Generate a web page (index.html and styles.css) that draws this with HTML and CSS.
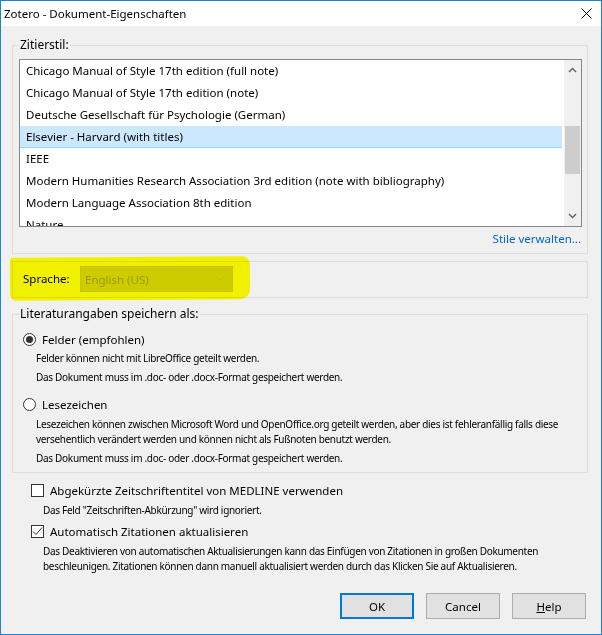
FILE: index.html
```html
<!DOCTYPE html>
<html lang="de">

<head>
    <meta charset="UTF-8">
    <meta name="viewport" content="width=device-width, initial-scale=1.0">
    <title>Zotero - Dokument-Eigenschaften</title>
    <link rel="stylesheet" href="styles.css">
</head>

<body>
    <div class="window">
        <div class="titlebar">
            <span class="title">Zotero - Dokument-Eigenschaften</span>
            <svg class="close" width="11" height="11" viewBox="0 0 11 11">
                <path d="M0.5 0.5L10.5 10.5M10.5 0.5L0.5 10.5" stroke="#000" stroke-width="1" />
            </svg>
        </div>

        <div class="content">
            <fieldset class="group styles">
                <legend>Zitierstil:</legend>
                <div class="listbox">
                    <ul class="items">
                        <li>Chicago Manual of Style 17th edition (full note)</li>
                        <li>Chicago Manual of Style 17th edition (note)</li>
                        <li>Deutsche Gesellschaft für Psychologie (German)</li>
                        <li class="selected">Elsevier - Harvard (with titles)</li>
                        <li>IEEE</li>
                        <li>Modern Humanities Research Association 3rd edition (note with bibliography)</li>
                        <li>Modern Language Association 8th edition</li>
                        <li>Nature</li>
                    </ul>
                    <div class="scrollbar">
                        <svg class="arrow" width="9" height="6" viewBox="0 0 9 6">
                            <path d="M1 5L4.5 1.5L8 5" fill="none" stroke="#606060" stroke-width="1.4" />
                        </svg>
                        <div class="track">
                            <div class="thumb"></div>
                        </div>
                        <svg class="arrow" width="9" height="6" viewBox="0 0 9 6">
                            <path d="M1 1L4.5 4.5L8 1" fill="none" stroke="#606060" stroke-width="1.4" />
                        </svg>
                    </div>
                </div>
                <div class="manage"><a href="#">Stile verwalten...</a></div>
            </fieldset>

            <div class="group language">
                <span class="marker"></span>
                <label class="lang-label">Sprache:</label>
                <div class="combo">
                    <span>English (US)</span>
                    <svg width="9" height="6" viewBox="0 0 9 6">
                        <path d="M1 1L4.5 4.5L8 1" fill="none" stroke="#bcbcbc" stroke-width="1" />
                    </svg>
                </div>
            </div>

            <fieldset class="group storage">
                <legend>Literaturangaben speichern als:</legend>
                <div class="option">
                    <span class="radio checked"></span>
                    <span>Felder (empfohlen)</span>
                </div>
                <p class="note first">Felder können nicht mit LibreOffice geteilt werden.</p>
                <p class="note">Das Dokument muss im .doc- oder .docx-Format gespeichert werden.</p>
                <div class="option second">
                    <span class="radio"></span>
                    <span>Lesezeichen</span>
                </div>
                <p class="note">Lesezeichen können zwischen Microsoft Word und OpenOffice.org geteilt werden, aber dies ist fehleranfällig falls diese versehentlich verändert werden und können nicht als Fußnoten benutzt werden.</p>
                <p class="note">Das Dokument muss im .doc- oder .docx-Format gespeichert werden.</p>
            </fieldset>

            <div class="checks">
                <div class="option">
                    <span class="checkbox"></span>
                    <span>Abgekürzte Zeitschriftentitel von MEDLINE verwenden</span>
                </div>
                <p class="note">Das Feld "Zeitschriften-Abkürzung" wird ignoriert.</p>
                <div class="option">
                    <span class="checkbox">
                        <svg width="11" height="11" viewBox="0 0 11 11">
                            <path d="M1 5.5L4 8.5L10 1.5" fill="none" stroke="#333" stroke-width="1" />
                        </svg>
                    </span>
                    <span>Automatisch Zitationen aktualisieren</span>
                </div>
                <p class="note">Das Deaktivieren von automatischen Aktualisierungen kann das Einfügen von Zitationen in großen Dokumenten beschleunigen. Zitationen können dann manuell aktualisiert werden durch das Klicken Sie auf Aktualisieren.</p>
            </div>

            <div class="buttons">
                <button class="default">OK</button>
                <button>Cancel</button>
                <button><u>H</u>elp</button>
            </div>
        </div>
    </div>
</body>

</html>
```

FILE: styles.css
```css
* {
    font-family: "Noto Sans", "Open Sans", sans-serif;
    box-sizing: border-box;
}

body {
    margin: 0;
}

.window {
    width: 602px;
    height: 635px;
    border: 1px solid #1883d7;
    background-color: #f0f0f0;
    font-size: 11.5px;
    color: #000;
    overflow: hidden;
}

.titlebar {
    height: 25px;
    background-color: white;
    display: flex;
    align-items: center;
    justify-content: space-between;
    padding: 0 9px 0 3px;
}

.title {
    font-size: 11.5px;
}

.content {
    padding: 0 13px 0 11px;
}

.group {
    border: 1px solid #dcdcdc;
    margin: 0;
    min-width: 0;
}

fieldset.group {
    padding: 0 5px 6px 6px;
}

fieldset.group legend {
    padding: 0 1px;
    line-height: 16px;
    font-size: 12px;
}

.styles {
    margin-top: 11px;
}

.listbox {
    margin-top: 6px;
    height: 168px;
    border: 1px solid #828790;
    background-color: white;
    display: flex;
    overflow: hidden;
}

.items {
    list-style: none;
    margin: 0;
    padding: 0;
    flex: 1;
}

.items li {
    height: 22px;
    line-height: 22px;
    padding-left: 6px;
    white-space: nowrap;
}

.items li.selected {
    background-color: #cce8ff;
    border-bottom: 1px solid #99d1ff;
    margin-right: 2px;
}

.scrollbar {
    width: 17px;
    background-color: #f0f0f0;
    display: flex;
    flex-direction: column;
    align-items: center;
}

.scrollbar .arrow {
    margin: 7px 0;
}

.track {
    flex: 1;
    width: 100%;
    padding-top: 46px;
}

.thumb {
    height: 48px;
    width: 15px;
    margin-left: 1px;
    background-color: #cdcdcd;
}

.manage {
    text-align: right;
    margin-top: 4px;
    line-height: 16px;
    padding-right: 1px;
}

.manage a {
    color: #0066cc;
    text-decoration: none;
}

.language {
    position: relative;
    margin-top: 7px;
    height: 37px;
    padding: 4px 0 0 10px;
    display: flex;
    align-items: flex-start;
}

.lang-label {
    width: 57px;
    line-height: 26px;
}

.combo {
    width: 153px;
    height: 26px;
    border: 1px solid #c5c5c5;
    background-color: #cccccc;
    color: #9a9a9a;
    display: flex;
    align-items: center;
    justify-content: space-between;
    padding: 0 7px 0 4px;
}

.marker {
    position: absolute;
    left: -3px;
    top: -5px;
    width: 240px;
    height: 43px;
    background-color: #ffff00;
    mix-blend-mode: multiply;
    border-radius: 4px 8px 10px 6px;
    transform: rotate(-0.4deg);
}

.storage {
    margin-top: 8px;
}

.option {
    display: flex;
    align-items: center;
    height: 18px;
    gap: 6px;
}

.storage .option {
    margin-top: 8px;
    padding-left: 4px;
}

.storage .option.second {
    margin-top: 10px;
}

.radio {
    width: 13px;
    height: 13px;
    border: 1px solid #333;
    border-radius: 50%;
    background-color: white;
    display: flex;
    align-items: center;
    justify-content: center;
}

.radio.checked::after {
    content: "";
    width: 7px;
    height: 7px;
    border-radius: 50%;
    background-color: #333;
}

.note {
    margin: 4px 0 0;
    font-size: 10px;
    letter-spacing: -0.3px;
    line-height: 15px;
}

.storage .note {
    padding-left: 17px;
}

.storage .note.first {
    margin-top: 3px;
}

.checks {
    padding: 8px 0 0 19px;
}

.checks .option {
    margin-top: 4px;
}

.checks .option:first-child {
    margin-top: 0;
}

.checks .note {
    padding-left: 12px;
}

.checkbox {
    width: 13px;
    height: 13px;
    border: 1px solid #333;
    background-color: white;
    display: flex;
}

.buttons {
    display: flex;
    justify-content: flex-end;
    gap: 12px;
    margin-top: 19px;
    padding-right: 2px;
}

button {
    width: 74px;
    height: 26px;
    border: 1px solid #adadad;
    background-color: #e1e1e1;
    font-size: 11.5px;
    color: #000;
    padding: 0;
}

button.default {
    border: 2px solid #0078d7;
}
```
